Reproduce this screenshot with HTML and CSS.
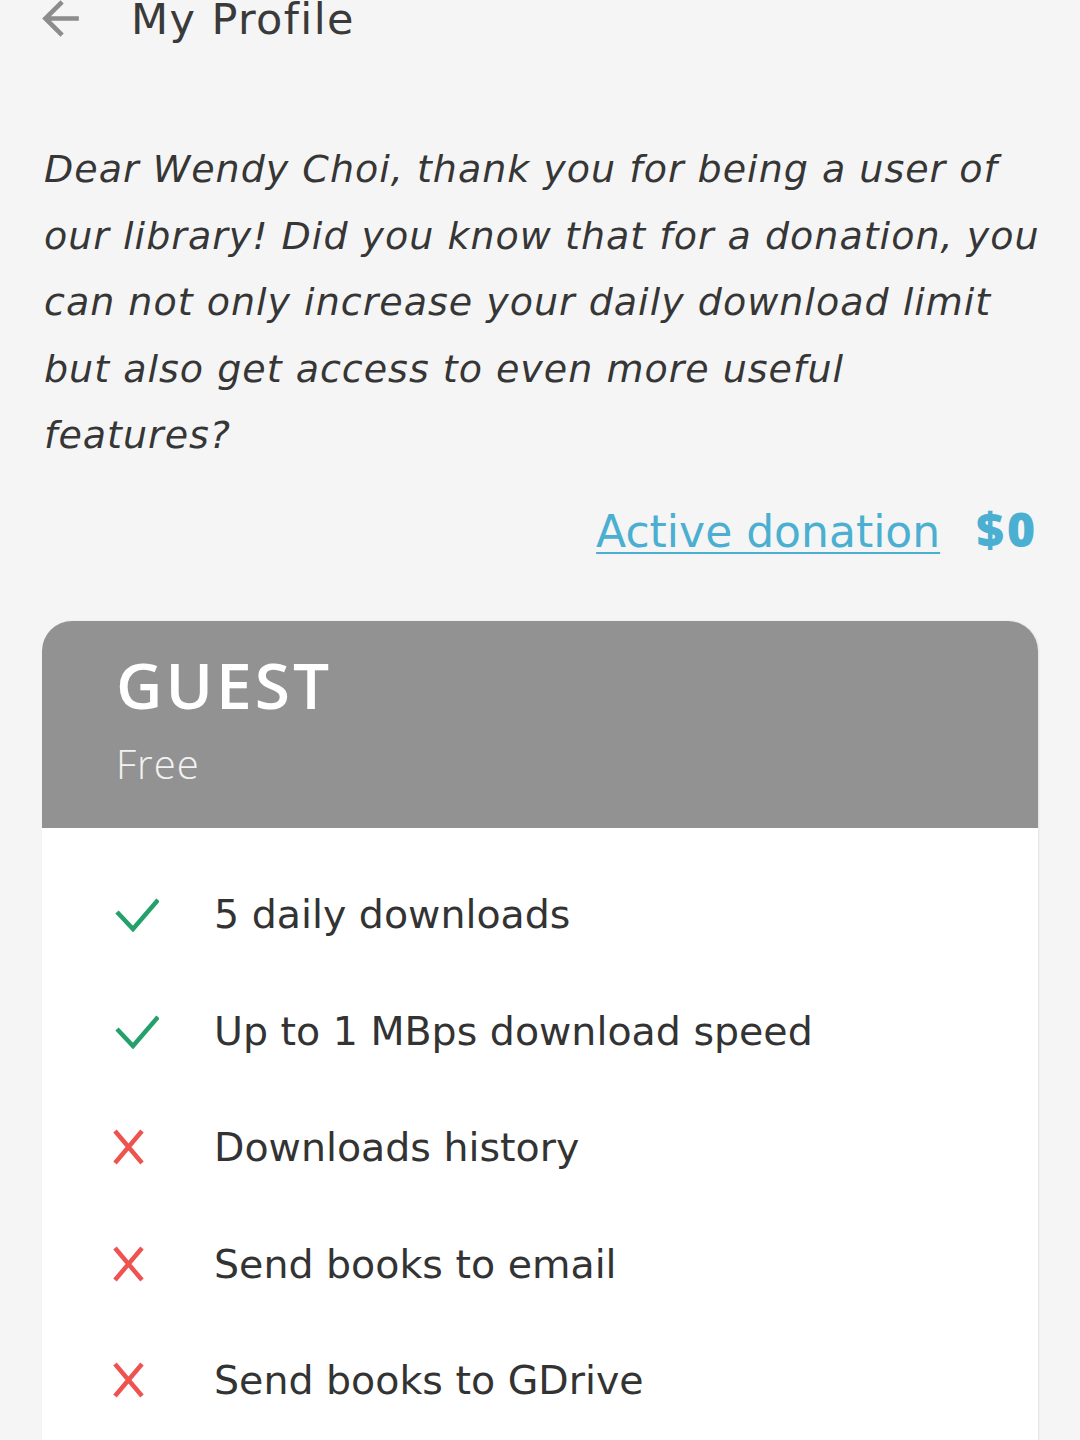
FILE: index.html
```html
<!DOCTYPE html>
<html lang="en">
  <head>
    <meta charset="UTF-8" />
    <title>My Profile</title>
    <link rel="stylesheet" href="styles.css">
  </head>
  <body>
    <header class="topbar">
      <svg class="back" viewBox="0 0 24 24" width="55" height="55">
        <path d="M20 11H7.83l5.59-5.59L12 4l-8 8 8 8 1.41-1.41L7.83 13H20v-2z" fill="#8c8c8c" />
      </svg>
      <h1>My Profile</h1>
    </header>

    <p class="intro">
      Dear Wendy Choi, thank you for being a user of<br>
      our library! Did you know that for a donation, you<br>
      can not only increase your daily download limit<br>
      but also get access to even more useful<br>
      features?
    </p>

    <div class="donation">
      <a href="#" class="donation-link">Active donation</a>
      <span class="donation-sum">$0</span>
    </div>

    <section class="plan">
      <div class="plan-head">
        <h2>GUEST</h2>
        <div class="plan-price">Free</div>
      </div>
      <ul class="features">
        <li>
          <span class="mark">
            <svg viewBox="0 0 46 36" width="46" height="36"><polyline points="4,16 20,33 45,4" class="yes" /></svg>
          </span>
          5 daily downloads
        </li>
        <li>
          <span class="mark">
            <svg viewBox="0 0 46 36" width="46" height="36"><polyline points="4,16 20,33 45,4" class="yes" /></svg>
          </span>
          Up to 1 MBps download speed
        </li>
        <li>
          <span class="mark">
            <svg viewBox="0 0 32 36" width="32" height="36"><path d="M2 2L29 34M29 2L2 34" class="no" /></svg>
          </span>
          Downloads history
        </li>
        <li>
          <span class="mark">
            <svg viewBox="0 0 32 36" width="32" height="36"><path d="M2 2L29 34M29 2L2 34" class="no" /></svg>
          </span>
          Send books to email
        </li>
        <li>
          <span class="mark">
            <svg viewBox="0 0 32 36" width="32" height="36"><path d="M2 2L29 34M29 2L2 34" class="no" /></svg>
          </span>
          Send books to GDrive
        </li>
      </ul>
    </section>
  </body>
</html>
```

FILE: styles.css
```css
body {
  margin: 0;
  padding: 0 42px;
  background: #f5f5f5;
  color: #363636;
  font-family: "DejaVu Sans", "Open Sans", sans-serif;
  overflow: hidden;
}

.topbar {
  display: flex;
  align-items: center;
  height: 55px;
  margin-top: -9px;
}
.back {
  margin-left: -9px;
  margin-right: 43px;
}
.topbar h1 {
  margin: 0;
  font-size: 43px;
  font-weight: 400;
  letter-spacing: 1.4px;
  color: #3a3a3a;
}

.intro {
  margin: 90px 0 0;
  padding-left: 2px;
  font-size: 38px;
  line-height: 66.6px;
  font-style: italic;
  letter-spacing: 1px;
  white-space: nowrap;
}

.donation {
  display: flex;
  justify-content: flex-end;
  align-items: baseline;
  gap: 36px;
  margin-top: 30px;
  line-height: 60px;
  color: #4aafd0;
}
.donation-link {
  color: #4aafd0;
  font-size: 44px;
  text-decoration-thickness: 2px;
  text-underline-offset: 5px;
}
.donation-sum {
  font-family: "Open Sans", sans-serif;
  font-size: 48px;
  font-weight: 800;
  letter-spacing: 3px;
}

.plan {
  margin-top: 59px;
  border-radius: 30px 30px 0 0;
  background: #fff;
  overflow: hidden;
  box-shadow: 1px 0 2px rgba(0, 0, 0, 0.08);
}
.plan-head {
  background: #929292;
  color: #fff;
  height: 207px;
  padding-left: 74px;
  box-sizing: border-box;
  padding-top: 26px;
  font-family: "Open Sans", sans-serif;
}
.plan-head h2 {
  margin: 0;
  font-size: 64px;
  font-weight: 600;
  line-height: 76px;
  letter-spacing: 3px;
}
.plan-price {
  margin-top: 16px;
  font-size: 40px;
  font-weight: 300;
  line-height: 50px;
  letter-spacing: 1px;
  color: #f2f2f2;
}

.features {
  list-style: none;
  margin: 0;
  padding: 28px 0 40px 71px;
}
.features li {
  display: flex;
  align-items: center;
  height: 116.5px;
  font-size: 39.5px;
  color: #333;
}
.mark {
  display: flex;
  align-items: center;
  width: 101px;
  flex-shrink: 0;
}
.mark svg {
  display: block;
}
.yes {
  fill: none;
  stroke: #24a06a;
  stroke-width: 4.5;
}
.no {
  fill: none;
  stroke: #ef5350;
  stroke-width: 4.5;
}
```
